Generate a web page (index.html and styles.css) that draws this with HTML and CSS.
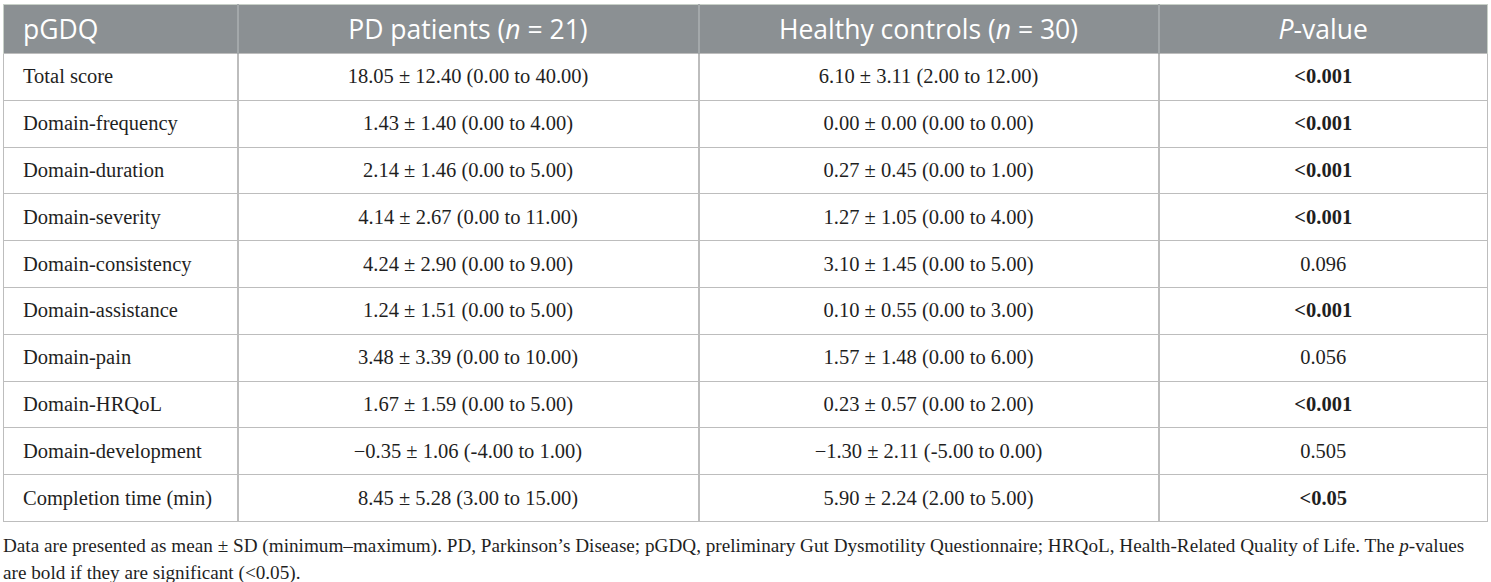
FILE: index.html
```html
<!DOCTYPE html>
<html lang="en">
<head>
    <meta charset="UTF-8">
    <title>pGDQ results - PD patients vs healthy controls</title>
    <link rel="stylesheet" href="styles.css">
</head>
<body>
    <div class="container">
        <table class="table">
            <colgroup>
                <col class="col-name">
                <col class="col-pd">
                <col class="col-hc">
                <col class="col-p">
            </colgroup>
            <thead>
                <tr>
                    <th class="left">pGDQ</th>
                    <th>PD patients (<i>n</i> = 21)</th>
                    <th>Healthy controls (<i>n</i> = 30)</th>
                    <th><i>P</i>-value</th>
                </tr>
            </thead>
            <tbody>
                <tr>
                    <td class="left">Total score</td>
                    <td>18.05 ± 12.40 (0.00 to 40.00)</td>
                    <td>6.10 ± 3.11 (2.00 to 12.00)</td>
                    <td><b>&lt;0.001</b></td>
                </tr>
                <tr>
                    <td class="left">Domain-frequency</td>
                    <td>1.43 ± 1.40 (0.00 to 4.00)</td>
                    <td>0.00 ± 0.00 (0.00 to 0.00)</td>
                    <td><b>&lt;0.001</b></td>
                </tr>
                <tr>
                    <td class="left">Domain-duration</td>
                    <td>2.14 ± 1.46 (0.00 to 5.00)</td>
                    <td>0.27 ± 0.45 (0.00 to 1.00)</td>
                    <td><b>&lt;0.001</b></td>
                </tr>
                <tr>
                    <td class="left">Domain-severity</td>
                    <td>4.14 ± 2.67 (0.00 to 11.00)</td>
                    <td>1.27 ± 1.05 (0.00 to 4.00)</td>
                    <td><b>&lt;0.001</b></td>
                </tr>
                <tr>
                    <td class="left">Domain-consistency</td>
                    <td>4.24 ± 2.90 (0.00 to 9.00)</td>
                    <td>3.10 ± 1.45 (0.00 to 5.00)</td>
                    <td>0.096</td>
                </tr>
                <tr>
                    <td class="left">Domain-assistance</td>
                    <td>1.24 ± 1.51 (0.00 to 5.00)</td>
                    <td>0.10 ± 0.55 (0.00 to 3.00)</td>
                    <td><b>&lt;0.001</b></td>
                </tr>
                <tr>
                    <td class="left">Domain-pain</td>
                    <td>3.48 ± 3.39 (0.00 to 10.00)</td>
                    <td>1.57 ± 1.48 (0.00 to 6.00)</td>
                    <td>0.056</td>
                </tr>
                <tr>
                    <td class="left">Domain-HRQoL</td>
                    <td>1.67 ± 1.59 (0.00 to 5.00)</td>
                    <td>0.23 ± 0.57 (0.00 to 2.00)</td>
                    <td><b>&lt;0.001</b></td>
                </tr>
                <tr>
                    <td class="left">Domain-development</td>
                    <td>−0.35 ± 1.06 (-4.00 to 1.00)</td>
                    <td>−1.30 ± 2.11 (-5.00 to 0.00)</td>
                    <td>0.505</td>
                </tr>
                <tr>
                    <td class="left">Completion time (min)</td>
                    <td>8.45 ± 5.28 (3.00 to 15.00)</td>
                    <td>5.90 ± 2.24 (2.00 to 5.00)</td>
                    <td><b>&lt;0.05</b></td>
                </tr>
            </tbody>
        </table>

        <p class="footnote">Data are presented as mean ± SD (minimum–maximum). PD, Parkinson’s Disease; pGDQ, preliminary Gut Dysmotility Questionnaire; HRQoL, Health-Related Quality of Life. The <span class="nowrap"><i>p</i>-values</span> are bold if they are significant (&lt;0.05).</p>
    </div>
</body>
</html>
```

FILE: styles.css
```css
:root {
    --head-bg: #8b9093;
    --head-border: #c8d0c8;
    --line: #bdbdbd;
    --text: #1f1f1f;
}

* {
    margin: 0;
    padding: 0;
    box-sizing: border-box;
}

body {
    background-color: white;
    color: var(--text);
    font-family: 'Liberation Serif', 'Times New Roman', serif;
}

.container {
    padding: 4px 4px 0 3px;
}

.table {
    width: 1484px;
    border-collapse: collapse;
    table-layout: fixed;
}

.col-name { width: 234px; }
.col-pd { width: 461px; }
.col-hc { width: 460px; }
.col-p { width: 329px; }

.table th {
    background-color: var(--head-bg);
    color: white;
    font-family: 'Open Sans', 'Noto Sans', sans-serif;
    font-weight: normal;
    font-size: 26.5px;
    height: 49px;
    padding: 0 19px;
    text-align: center;
    border: 1px solid var(--head-border);
    border-bottom: none;
}

.table th + th {
    border-left: 2px solid #a3a8aa;
}

.table td {
    height: 46.8px;
    padding: 0 19px;
    font-size: 20.5px;
    text-align: center;
    border: 1px solid var(--line);
}

.table td + td {
    border-left-width: 2px;
}

.table .left {
    text-align: left;
}

.table b {
    font-weight: bold;
}

.footnote {
    max-width: 1470px;
    font-size: 19.2px;
    line-height: 27px;
    margin-top: 10px;
}

.nowrap {
    white-space: nowrap;
}
```
